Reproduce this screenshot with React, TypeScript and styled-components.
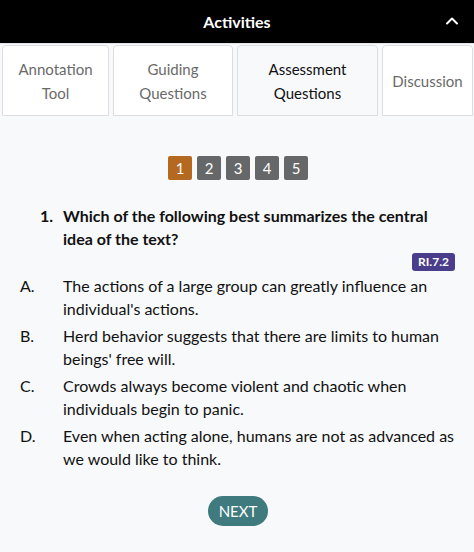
import React, { useState } from 'react';
import styled, { createGlobalStyle } from 'styled-components';

const GlobalStyle = createGlobalStyle`
  html, body {
    margin: 0;
    padding: 0;
    background: #f8f9fb;
    font-family: Lato, "Open Sans", sans-serif;
  }
`;

const Panel = styled.div`
  width: 474px;
  min-height: 552px;
  background: #f8f9fb;
`;

const Header = styled.header`
  height: 43px;
  background: #000;
  color: #fff;
  display: flex;
  align-items: center;
  justify-content: center;
  position: relative;
  font-size: 16px;
  font-weight: 700;
  border-bottom: 1px solid #e2e4e8;
`;

const Collapse = styled.button`
  position: absolute;
  right: 12px;
  top: 11px;
  width: 20px;
  height: 20px;
  padding: 0;
  border: none;
  background: transparent;
  color: #fff;
  display: flex;
  align-items: center;
  justify-content: center;
`;

const Tabs = styled.nav`
  display: flex;
  gap: 4px;
  padding: 1px 2px 0;
`;

const Tab = styled.button<{ $w: number; $active?: boolean }>`
  width: ${p => p.$w}px;
  flex: none;
  height: 71px;
  padding: 0 6px;
  border: 1px solid #dcdde0;
  border-radius: 4px 4px 0 0;
  background: ${p => (p.$active ? '#f8f9fb' : '#fff')};
  color: ${p => (p.$active ? '#111' : '#6a6a6a')};
  font-family: Lato, sans-serif;
  font-size: 15px;
  line-height: 24px;
  text-align: center;
`;

const Pager = styled.div`
  display: flex;
  justify-content: center;
  gap: 5px;
  margin-top: 40px;
  padding-left: 2px;
`;

const Page = styled.button<{ $current?: boolean }>`
  width: 24px;
  height: 24px;
  padding: 0;
  border: none;
  border-radius: 2px;
  background: ${p => (p.$current ? '#b5681f' : '#666769')};
  color: #fff;
  font-family: Lato, sans-serif;
  font-size: 15px;
`;

const Body = styled.section`
  padding: 24px 16px 0 20px;
`;

const Question = styled.div`
  display: grid;
  grid-template-columns: 23px 1fr;
  padding-left: 20px;
  font-size: 16px;
  font-weight: 700;
  line-height: 23px;
  color: #111;
`;

const BadgeRow = styled.div`
  display: flex;
  justify-content: flex-end;
  margin-top: 3px;
  padding-right: 3px;
`;

const Badge = styled.span`
  background: #4a3d8c;
  color: #fff;
  font-size: 12px;
  font-weight: 700;
  line-height: 18px;
  padding: 0 6px;
  border-radius: 3px;
`;

const Options = styled.ol`
  list-style: none;
  margin: 3px 0 0;
  padding: 0;
  display: flex;
  flex-direction: column;
  gap: 4px;
`;

const Option = styled.li`
  display: grid;
  grid-template-columns: 43px 1fr;
  font-size: 16px;
  line-height: 23px;
  color: #111;
`;

const Footer = styled.div`
  display: flex;
  justify-content: center;
  margin-top: 26px;
  padding-left: 2px;
`;

const NextButton = styled.button`
  width: 60px;
  height: 30px;
  border: none;
  border-radius: 15px;
  background: #3e7a7e;
  color: #fff;
  font-family: Lato, sans-serif;
  font-size: 15px;
  padding: 0;
`;

const tabs = [
  { label: 'Annotation Tool', w: 107 },
  { label: 'Guiding Questions', w: 120 },
  { label: 'Assessment Questions', w: 141 },
  { label: 'Discussion', w: 91 },
];

const options = [
  ['A.', "The actions of a large group can greatly influence an individual's actions."],
  ['B.', "Herd behavior suggests that there are limits to human beings' free will."],
  ['C.', 'Crowds always become violent and chaotic when individuals begin to panic.'],
  ['D.', 'Even when acting alone, humans are not as advanced as we would like to think.'],
];

export default function App() {
  const [activeTab, setActiveTab] = useState(2);
  const [page, setPage] = useState(1);

  return (
    <Panel>
      <GlobalStyle />
      <Header>
        Activities
        <Collapse aria-label="Collapse">
          <svg width="14" height="14" viewBox="0 0 14 14" fill="none" stroke="currentColor" strokeWidth="2" strokeLinecap="round" strokeLinejoin="round">
            <path d="M2 9.5 7 4.5l5 5" />
          </svg>
        </Collapse>
      </Header>
      <Tabs>
        {tabs.map((t, i) => (
          <Tab key={t.label} $w={t.w} $active={i === activeTab} onClick={() => setActiveTab(i)}>
            {t.label}
          </Tab>
        ))}
      </Tabs>
      <Pager>
        {[1, 2, 3, 4, 5].map(n => (
          <Page key={n} $current={n === page} onClick={() => setPage(n)}>
            {n}
          </Page>
        ))}
      </Pager>
      <Body>
        <Question>
          <span>1.</span>
          <span>Which of the following best summarizes the central idea of the text?</span>
        </Question>
        <BadgeRow>
          <Badge>RI.7.2</Badge>
        </BadgeRow>
        <Options>
          {options.map(([letter, text]) => (
            <Option key={letter}>
              <span>{letter}</span>
              <span>{text}</span>
            </Option>
          ))}
        </Options>
      </Body>
      <Footer>
        <NextButton>NEXT</NextButton>
      </Footer>
    </Panel>
  );
}
